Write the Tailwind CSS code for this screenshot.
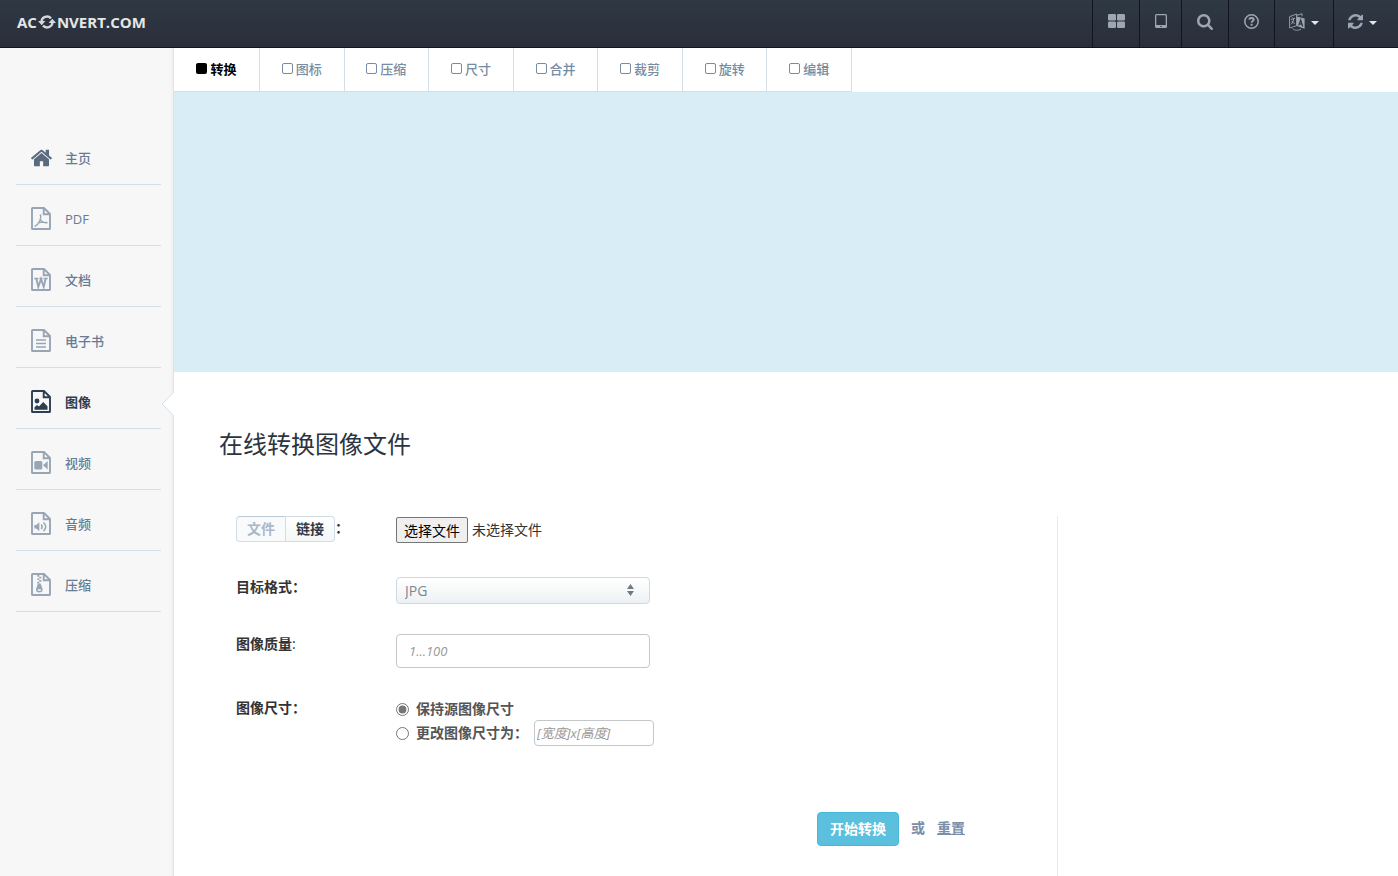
<!DOCTYPE html>
<html lang="zh-CN">
<head>
<meta charset="utf-8">
<title>在线转换图像文件</title>
<script src="https://cdn.jsdelivr.net/npm/@tailwindcss/browser@4"></script>
</head>
<body class="min-h-screen flex flex-col bg-white text-[13px] leading-5 text-[#333] font-['Open_Sans','Noto_Sans_CJK_SC',sans-serif]">
<svg class="hidden">
  <symbol id="refresh" viewBox="0 0 1536 1536"><path d="M1511 928q0 5-1 7-64 268-268 434.500t-478 166.500q-146 0-282.500-55t-243.500-157l-129 129q-19 19-45 19t-45-19-19-45v-448q0-26 19-45t45-19h448q26 0 45 19t19 45-19 45l-137 137q71 66 161 102t187 36q134 0 250-65t186-179q11-17 53-117 8-23 30-23h192q13 0 22.500 9.500t9.500 22.500zm25-800v448q0 26-19 45t-45 19h-448q-26 0-45-19t-19-45 19-45l138-138q-148-137-349-137-134 0-250 65t-186 179q-11 17-53 117-8 23-30 23h-199q-13 0-22.500-9.500t-9.500-22.500v-7q65-268 270-434.500t480-166.500q146 0 284 55.500t245 156.500l130-129q19-19 45-19t45 19 19 45z"/></symbol>
  <symbol id="file" viewBox="0 0 20 23"><path d="M1 1.600Q1 1 1.600 1H13l6 6v14.400q0 .6-.6.6H1.600Q1 22 1 21.400zM12.700 1v6.300H19" fill="none" stroke="currentColor" stroke-width="1.900"/></symbol>
</svg>

<header class="h-12 shrink-0 flex justify-between border-b border-[#12161c] bg-linear-to-b from-[#2e3943] to-[#2a2e3b]">
  <a href="#" class="flex items-center h-[43px] pl-[17px] text-[15px] font-bold text-[#e6e6e6]">AC<svg class="w-[18px] h-[14px] mx-px" viewBox="0 0 18 14" fill="none" stroke="#d4d8dc" stroke-width="2.400"><path d="M3.500 6.500A5.500 5.300 0 0 1 13 3.300M14.500 7.500A5.500 5.300 0 0 1 5 10.700"/><path d="M0 6h7.400L3.700 10.200zM10.600 8H18l-3.700-4.200z" fill="#d4d8dc" stroke="none"/></svg>NVERT.COM</a>
  <nav class="flex text-[#9da6b3]">
    <a href="#" aria-label="应用" class="w-[47px] border-l border-[#12161c] flex justify-center h-full pb-[5px] items-center"><svg class="w-[17px] h-[14px]" viewBox="0 0 17 14" fill="currentColor"><rect width="8" height="6.500" rx="1.200"/><rect x="9" width="8" height="6.500" rx="1.200"/><rect y="7.500" width="8" height="6.500" rx="1.200"/><rect x="9" y="7.500" width="8" height="6.500" rx="1.200"/></svg></a>
    <a href="#" aria-label="移动版" class="w-[42px] border-l border-[#12161c] flex justify-center pb-[5px] items-center"><svg class="w-3 h-[14px]" viewBox="0 0 12 14"><path fill-rule="evenodd" fill="currentColor" d="M1.500 0h9Q12 0 12 1.500v11q0 1.500-1.500 1.500h-9Q0 14 0 12.500v-11Q0 0 1.500 0zM1.300 1.300v9.700h9.400V1.300zM5.300 12h1.400v1H5.300z"/></svg></a>
    <a href="#" aria-label="搜索" class="w-[47px] border-l border-[#12161c] flex justify-center pb-[3px] items-center"><svg class="size-4" viewBox="64 128 1664 1664" fill="currentColor"><path d="M1216 832q0-185-131.500-316.500t-316.500-131.500-316.500 131.500-131.500 316.500 131.500 316.500 316.500 131.500 316.500-131.500 131.500-316.500zm512 832q0 52-38 90t-90 38q-54 0-90-38l-343-342q-179 124-399 124-143 0-273.500-55.500t-225-150-150-225-55.500-273.500 55.500-273.500 150-225 225-150 273.500-55.500 273.500 55.500 225 150 150 225 55.500 273.500q0 220-124 399l343 343q37 37 37 90z"/></svg></a>
    <a href="#" aria-label="帮助" class="w-[46px] border-l border-[#12161c] flex justify-center pb-1 items-center"><svg class="size-[15px]" viewBox="0 0 15 15" fill="none" stroke="currentColor"><circle cx="7.500" cy="7.500" r="6.700" stroke-width="1.500"/><path d="M5.300 5.600C5.600 3.400 9.700 3.400 9.700 5.700c0 1.400-2.100 1.400-2.100 3" stroke-width="1.900"/><path d="M6.600 9.800h2v1.900h-2z" fill="currentColor" stroke="none"/></svg></a>
    <a href="#" aria-label="语言" class="w-[59px] border-l border-[#12161c] flex justify-center gap-[6px] pr-px pb-[3px] items-center"><svg class="w-4 h-[18px]" viewBox="0 0 16 18" fill="none" stroke="currentColor"><path d="M.6 3.600 7.600 1v11.700L.6 15zM8 2.300l5-1.600v2.600M3.500 15.500c2 2.200 6 2.200 8.500.6" stroke-width=".9"/><path d="M7.600 3.500 15.600 5.500v10.200l-8-2.700z" fill="currentColor" stroke="none"/><path d="M2 6.500l4-1.300M4.700 5.700C4.500 8 3.500 10 2 11.300M2.700 8l3 3M2.500 3.600l.9.900" stroke-width="1"/><path d="m9.700 12.500 2-5.500 2 6.500M10.500 10.700l2.500.7" stroke="#2c343f" stroke-width="1.200"/></svg><svg class="w-2 h-1 mt-[2px]" viewBox="0 0 8 4"><path d="M0 0h8L4 4z" fill="#e6e6e6"/></svg></a>
    <a href="#" aria-label="刷新" class="w-[65px] border-l border-[#12161c] flex justify-center gap-[6px] pr-2 pb-1 items-center"><svg class="size-[15px]" fill="currentColor"><use href="#refresh"/></svg><svg class="w-2 h-1 mt-[2px]" viewBox="0 0 8 4"><path d="M0 0h8L4 4z" fill="#e6e6e6"/></svg></a>
  </nav>
</header>

<div class="flex flex-1">
  <aside class="w-[174px] shrink-0 bg-[#f7f7f7] border-r border-[#dae3e9] pt-[76px] pl-4 pr-3 shadow-[inset_-4px_0_4px_-3px_rgba(0,0,0,0.04)]">
    <ul class="text-[#667b95]">
      <li class="h-[61px] border-b border-[#d5dde5]"><a href="#" class="flex items-center h-full pt-[7px] pl-[15px] font-medium"><svg class="w-[21px] h-[18px] mr-[13px] text-[#5a6a7f]" viewBox="90 250 1612 1290" fill="currentColor"><path d="M1472 992v480q0 26-19 45t-45 19h-384v-384h-256v384h-384q-26 0-45-19t-19-45v-480q0-1 .5-3t.5-3l575-474 575 474q1 2 1 6zm223-69l-62 74q-8 9-21 11h-3q-13 0-21-7l-692-577-692 577q-12 8-24 7-13-2-21-11l-62-74q-8-10-7-23.500t11-21.500l719-599q32-26 76-26t76 26l244 204v-195q0-14 9-23t23-9h192q14 0 23 9t9 23v408l219 182q10 8 11 21.500t-7 23.500z"/></svg>主页</a></li>
      <li class="h-[61px] border-b border-[#d5dde5]"><a href="#" class="flex items-center h-full pt-[7px] pl-[15px]"><svg class="w-5 h-[23px] mr-[14px] text-[#98a5b5]" viewBox="0 0 20 23" fill="none" stroke="currentColor"><use href="#file"/><path d="M9 7.500c1 1 .8 3.300.2 5C8.300 15.500 6 18.500 3.500 19.500M9.300 12.300c1.200 2.500 3.700 3.700 7.200 3.500M6.500 16.300c3-1.300 6-1.700 10-.8" stroke-width="1.300"/></svg>PDF</a></li>
      <li class="h-[61px] border-b border-[#d5dde5]"><a href="#" class="flex items-center h-full pt-[7px] pl-[15px] font-medium"><svg class="w-5 h-[23px] mr-[14px] text-[#98a5b5]" viewBox="0 0 20 23" fill="none" stroke="currentColor"><use href="#file"/><path d="M5.300 10.500 7.300 18.800 10 11l2.700 7.800 2-8.300" stroke-width="1.900"/><path d="M3.300 10.500h4.200M8.500 10.500h3M12.500 10.500h4.200" stroke-width="1.300"/></svg>文档</a></li>
      <li class="h-[61px] border-b border-[#d5dde5]"><a href="#" class="flex items-center h-full pt-[7px] pl-[15px] font-medium"><svg class="w-5 h-[23px] mr-[14px] text-[#98a5b5]" viewBox="0 0 20 23" fill="none" stroke="currentColor"><use href="#file"/><path d="M5 11h10M5 14.500h10M5 18h10" stroke-width="1.700"/></svg>电子书</a></li>
      <li class="relative h-[61px] border-b border-[#d5dde5]"><a href="#" class="flex items-center h-full pt-[7px] pl-[15px] font-bold text-[#2d3e50]"><svg class="w-5 h-[23px] mr-[14px]" viewBox="0 0 20 23" fill="currentColor"><use href="#file"/><circle cx="6" cy="11" r="2.400"/><path d="M3.500 19.700v-2.500l2.500-2.300 2 1.700L12.200 12l4.300 4.300v3.400z"/></svg>图像</a>
        <svg class="absolute -right-[13px] top-6 w-[13px] h-6" viewBox="0 0 13 24"><path d="M13 0 .7 12 13 24z" fill="#fff"/><path d="M12.500 .7 1 12l11.500 11.300" fill="none" stroke="#d5dfe5"/></svg></li>
      <li class="h-[61px] border-b border-[#d5dde5]"><a href="#" class="flex items-center h-full pt-[7px] pl-[15px] font-medium"><svg class="w-5 h-[23px] mr-[14px] text-[#98a5b5]" viewBox="0 0 20 23" fill="currentColor"><use href="#file"/><rect x="3.300" y="10" width="8" height="8.500" rx="1.500"/><path d="M12 14.200 16.700 10v8.500z"/></svg>视频</a></li>
      <li class="h-[61px] border-b border-[#d5dde5]"><a href="#" class="flex items-center h-full pt-[7px] pl-[15px] font-medium"><svg class="w-5 h-[23px] mr-[14px] text-[#98a5b5]" viewBox="0 0 20 23" fill="none" stroke="currentColor"><use href="#file"/><path d="M3.300 13h2l3-2.700v9l-3-2.700h-2z" fill="currentColor" stroke="none"/><path d="M10.200 12.500q2 2.300 0 4.600M12.500 10.500q4.500 4.300 0 8.600" stroke-width="1.500"/></svg>音频</a></li>
      <li class="h-[61px] border-b border-[#d5dde5]"><a href="#" class="flex items-center h-full pt-[7px] pl-[15px] font-medium"><svg class="w-5 h-[23px] mr-[14px] text-[#98a5b5]" viewBox="0 0 20 23" fill="currentColor"><use href="#file"/><path d="M6.300 2h2v1.700h-2zM8.300 3.700h2v1.700h-2zM6.300 5.400h2v1.700h-2zM8.300 7.100h2v1.700h-2zM6.300 8.800h2v1.700h-2z"/><path fill-rule="evenodd" d="M7 10.500h2.600l2 5.500c.8 4.700-7.400 4.700-6.600 0zM6.700 16.200h3.200v1.500H6.700z"/></svg>压缩</a></li>
    </ul>
  </aside>

  <main class="flex-1 min-w-0">
    <nav class="flex h-11 w-[678px] border-b border-[#d5dde5] font-medium text-[#778ba2]">
      <a href="#" class="w-[86px] flex items-center justify-center gap-[3px] pb-[2px] border-r border-[#d5dde5] font-bold text-black"><span class="size-[11px] rounded-xs bg-black"></span>转换</a>
      <a href="#" class="flex-1 flex items-center justify-center gap-[3px] pb-[2px] border-r border-[#d5dde5]"><span class="size-[11px] rounded-xs border border-[#778ba2]"></span>图标</a>
      <a href="#" class="flex-1 flex items-center justify-center gap-[3px] pb-[2px] border-r border-[#d5dde5]"><span class="size-[11px] rounded-xs border border-[#778ba2]"></span>压缩</a>
      <a href="#" class="flex-1 flex items-center justify-center gap-[3px] pb-[2px] border-r border-[#d5dde5]"><span class="size-[11px] rounded-xs border border-[#778ba2]"></span>尺寸</a>
      <a href="#" class="flex-1 flex items-center justify-center gap-[3px] pb-[2px] border-r border-[#d5dde5]"><span class="size-[11px] rounded-xs border border-[#778ba2]"></span>合并</a>
      <a href="#" class="flex-1 flex items-center justify-center gap-[3px] pb-[2px] border-r border-[#d5dde5]"><span class="size-[11px] rounded-xs border border-[#778ba2]"></span>裁剪</a>
      <a href="#" class="flex-1 flex items-center justify-center gap-[3px] pb-[2px] border-r border-[#d5dde5]"><span class="size-[11px] rounded-xs border border-[#778ba2]"></span>旋转</a>
      <a href="#" class="flex-1 flex items-center justify-center gap-[3px] pb-[2px] border-r border-[#d5dde5]"><span class="size-[11px] rounded-xs border border-[#778ba2]"></span>编辑</a>
    </nav>
    <div class="h-[280px] bg-[#d9edf7]"></div>
    <h1 class="mt-[52px] pl-[45px] text-2xl leading-10 text-[#2c343f]">在线转换图像文件</h1>
    <div class="mt-[52px] grid grid-cols-[884fr_340fr]">
      <form class="border-r border-[#e9ecef] pl-[62px] pr-[92px] min-h-[360px]">
        <div class="flex h-[61px] items-start">
          <div class="w-40 flex text-sm font-bold leading-6">
            <button type="button" class="w-[50px] h-[26px] rounded-l-sm border border-[#d0dde3] border-t-[#bccbd5] bg-[#f9fafb] text-[#aab8c6] leading-6">文件</button><button type="button" class="w-[49px] h-[26px] rounded-r-sm border border-l-0 border-[#d0dde3] bg-linear-to-b from-white to-[#f4f6f7] text-[#323a45] leading-6">链接</button><span>：</span>
          </div>
          <div class="flex items-center text-sm"><label for="file-input" class="h-[26px] w-[72px] text-center leading-[26px] rounded-xs border border-[#767676] bg-[#efefef] text-black">选择文件</label><input id="file-input" type="file" class="sr-only"><span class="ml-1 leading-7">未选择文件</span></div>
        </div>
        <div class="flex h-[57px] items-start">
          <label for="fmt" class="w-40 text-sm font-bold">目标格式：</label>
          <div class="relative w-[254px]"><select id="fmt" class="appearance-none w-full h-[27px] pl-2 rounded-sm border border-[#cddbe1] bg-linear-to-b from-white to-[#edf1f3] text-sm text-[#7b8794]"><option>JPG</option></select>
            <svg class="absolute right-4 top-[7px] w-[7px] h-3 pointer-events-none" viewBox="0 0 7 12" fill="#6f7b86"><path d="M3.500 0 7 5H0zM0 7h7l-3.500 5z"/></svg></div>
        </div>
        <div class="flex h-16 items-start">
          <label for="quality" class="w-40 text-sm font-bold">图像质量<span class="font-normal">:</span></label>
          <input id="quality" type="text" placeholder="1...100" class="w-[254px] h-[34px] px-3 rounded-sm border border-[#c4c7ca] placeholder:italic placeholder:text-[#999]">
        </div>
        <fieldset class="flex items-start text-sm font-bold">
          <div class="w-40">图像尺寸：</div>
          <div class="flex flex-col text-[#555]">
            <label class="flex items-center h-[22px]"><input type="radio" name="size" checked class="mr-[7px] size-[13px] accent-[#767676]">保持源图像尺寸</label>
            <div class="flex items-center h-[26px]"><label for="resize" class="flex items-center w-[138px] whitespace-nowrap"><input id="resize" type="radio" name="size" class="mr-[7px] size-[13px] accent-[#767676] shrink-0">更改图像尺寸为：</label><input type="text" aria-label="图像尺寸" placeholder="[宽度]x[高度]" class="w-[120px] h-[26px] px-[2px] rounded-sm border border-[#c4c7ca] text-[13px] font-normal placeholder:italic placeholder:text-[#999]"></div>
          </div>
        </fieldset>
        <div class="mt-[66px] flex justify-end items-center text-sm font-bold text-[#7a8ea8]">
          <button type="submit" class="h-[34px] w-[82px] rounded-sm border border-[#46b8da] bg-[#5bc0de] text-white mr-3">开始转换</button>
          <div class="flex gap-3 pb-[2px]"><span>或</span><button type="reset" class="underline">重置</button></div>
        </div>
      </form>
    </div>
  </main>
</div>
</body>
</html>
